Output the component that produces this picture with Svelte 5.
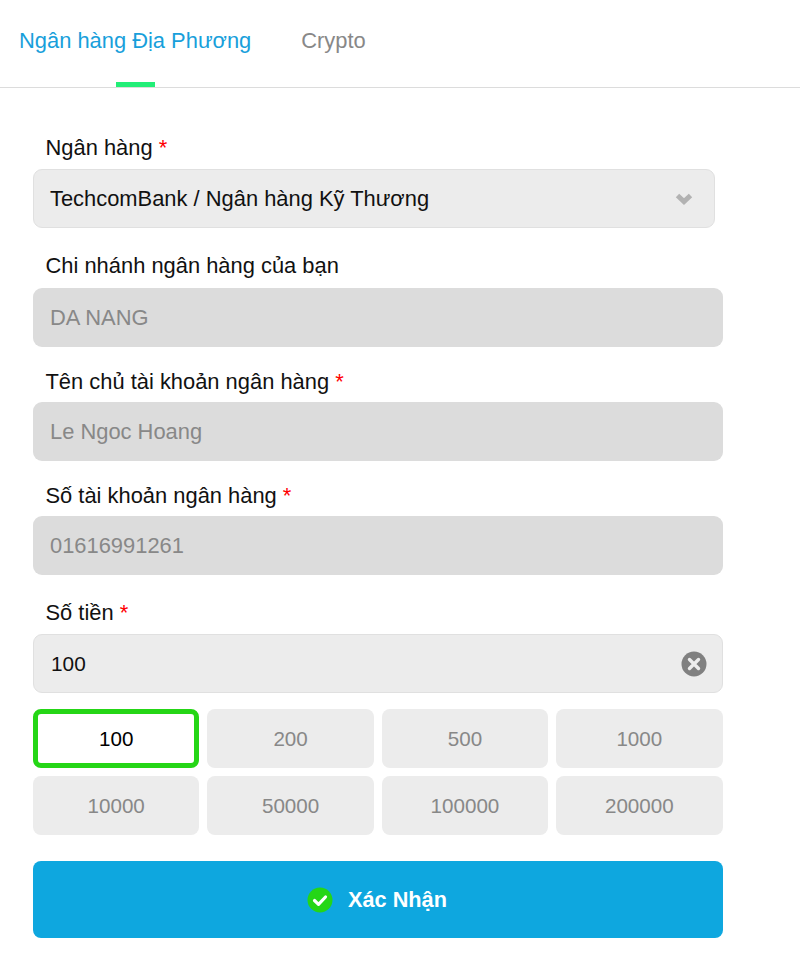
<script>
  const fields = [
    { label: 'Chi nhánh ngân hàng của bạn', value: 'DA NANG', required: false, cls: 'second' },
    { label: 'Tên chủ tài khoản ngân hàng', value: 'Le Ngoc Hoang', required: true, cls: '' },
    { label: 'Số tài khoản ngân hàng', value: '01616991261', required: true, cls: '' }
  ];
  const amounts = ['100', '200', '500', '1000', '10000', '50000', '100000', '200000'];
  let selected = $state('100');
</script>

<div class="page">
  <nav class="tabs">
    <button class="tab active">Ngân hàng Địa Phương</button>
    <button class="tab">Crypto</button>
  </nav>

  <form class="form" onsubmit={(e) => e.preventDefault()}>
    <div class="field first">
      <div class="label">Ngân hàng <span class="req">*</span></div>
      <div class="select">
        <span>TechcomBank / Ngân hàng Kỹ Thương</span>
        <svg width="18" height="14" viewBox="0 0 18 14"><path d="M2.500 3.500 9 9.500l6.500-6" fill="none" stroke="#b2b2b2" stroke-width="5"/></svg>
      </div>
    </div>

    {#each fields as f}
      <div class="field {f.cls}">
        <div class="label">{f.label}{#if f.required}&nbsp;<span class="req">*</span>{/if}</div>
        <div class="input disabled">{f.value}</div>
      </div>
    {/each}

    <div class="field last">
      <div class="label">Số tiền <span class="req">*</span></div>
      <div class="input amount">
        <span>{selected}</span>
        <svg width="26" height="26" viewBox="0 0 26 26"><circle cx="13" cy="13" r="12.500" fill="#808080"/><path d="M8.500 8.500l9 9m0-9l-9 9" stroke="#eee" stroke-width="3.400" stroke-linecap="round"/></svg>
      </div>
    </div>

    <div class="chips">
      {#each amounts as a}
        <button type="button" class="chip" class:on={selected === a} onclick={() => (selected = a)}>{a}</button>
      {/each}
    </div>

    <button class="submit" type="submit">
      <svg width="26" height="26" viewBox="0 0 26 26"><circle cx="13" cy="13" r="12.500" fill="#25d616"/><path d="M7.500 13.500l4 3.800 7-7.300" fill="none" stroke="#fff" stroke-width="3.200" stroke-linecap="round" stroke-linejoin="round"/></svg>
      <span>Xác Nhận</span>
    </button>
  </form>
</div>

<style>
  :global(body) {
    margin: 0;
    background: #fff;
  }
  .page {
    font-family: "Liberation Sans", Arial, sans-serif;
    font-size: 21.9px;
    color: #000;
    height: 975px;
  }
  button {
    font-family: inherit;
    font-size: inherit;
    padding: 0;
    border: 0;
    cursor: pointer;
  }
  .tabs {
    display: flex;
    gap: 50px;
    padding-left: 19px;
    height: 87px;
    border-bottom: 1px solid #dcdcdc;
    align-items: flex-start;
  }
  .tab {
    position: relative;
    background: none;
    color: #888;
    height: 87px;
    line-height: 76px;
    padding-bottom: 6px;
    box-sizing: border-box;
  }
  .tab.active {
    color: #189fdb;
  }
  .tab.active::after {
    content: "";
    position: absolute;
    left: 50%;
    bottom: 0;
    width: 39px;
    margin-left: -19.500px;
    height: 5px;
    background: #22ee77;
  }
  .form {
    padding: 47px 77px 0 33px;
  }
  .field {
    margin-top: 22px;
  }
  .field.first {
    margin-top: 0;
  }
  .field.second {
    margin-top: 25px;
  }
  .field.last {
    margin-top: 25px;
  }
  .label {
    line-height: 26px;
    padding-left: 12.500px;
    margin-bottom: 7px;
    color: #111;
  }
  .field.first .label {
    margin-bottom: 8px;
  }
  .field.second .label {
    margin-bottom: 9px;
  }
  .field.last .label {
    margin-bottom: 8px;
  }
  .req {
    color: #f00;
  }
  .select,
  .input {
    box-sizing: border-box;
    height: 59px;
    border-radius: 9px;
    display: flex;
    align-items: center;
    justify-content: space-between;
    padding: 0 17px;
  }
  .select {
    width: 682px;
    background: #ececec;
    border: 1px solid #e0e0e0;
    color: #111;
    padding-left: 16px;
    padding-right: 21px;
  }
  .input.disabled {
    background: #dcdcdc;
    color: #888;
  }
  .input.amount {
    background: #ececec;
    border: 1px solid #e0e0e0;
    color: #111;
    font-size: 20.800px;
    padding-right: 15px;
  }
  .chips {
    display: grid;
    grid-template-columns: repeat(4, 1fr);
    gap: 8px;
    margin-top: 16px;
    margin-right: 0.500px;
  }
  .chip {
    box-sizing: border-box;
    height: 59px;
    border-radius: 8px;
    background: #ececec;
    color: #888;
    font-size: 20.600px;
  }
  .chip.on {
    background: #fff;
    color: #000;
    border: 5px solid #25d616;
  }
  .submit {
    width: 100%;
    height: 77px;
    margin-top: 26px;
    border-radius: 8px;
    background: #0ea7df;
    color: #fff;
    font-size: 21.700px;
    font-weight: 700;
    display: flex;
    align-items: center;
    justify-content: center;
    gap: 15px;
    padding-right: 2px;
    box-sizing: border-box;
  }
</style>
